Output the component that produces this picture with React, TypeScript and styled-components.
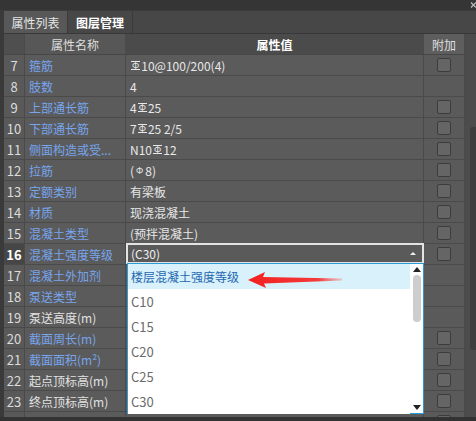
import React from "react";
import styled, { createGlobalStyle } from "styled-components";

const GlobalStyle = createGlobalStyle`
  html, body {
    margin: 0;
    padding: 0;
    background: #353535;
  }
  body {
    font-family: "Noto Sans CJK SC", "Noto Sans", sans-serif;
    font-size: 12px;
  }
  * {
    box-sizing: border-box;
  }
`;

const Window = styled.div`
  width: 476px;
  height: 421px;
  display: flex;
  flex-direction: column;
  background: #353535;
  overflow: hidden;
`;

const TopStrip = styled.div`
  height: 10px;
  flex-shrink: 0;
  display: flex;
  justify-content: flex-end;
  align-items: flex-start;
  padding-top: 2px;
  margin-right: -2px;
`;

const Content = styled.div`
  flex: 1;
  display: flex;
  min-height: 0;
`;

const LeftEdge = styled.div`
  width: 4px;
  flex-shrink: 0;
  background: #3a3a3a;
`;

const Panel = styled.div`
  flex: 1;
  display: flex;
  flex-direction: column;
  min-width: 0;
`;

const TabBar = styled.div`
  height: 24px;
  flex-shrink: 0;
  display: flex;
  background: #474747;
  border-top: 1px solid #3c3c3c;
  border-bottom: 1px solid #383838;
`;

const Tab = styled.div<{ $active?: boolean }>`
  width: ${(p) => (p.$active ? 64 : 65)}px;
  display: flex;
  align-items: center;
  justify-content: center;
  background: ${(p) => (p.$active ? "#585858" : "#474747")};
  color: ${(p) => (p.$active ? "#e6e6e6" : "#ffffff")};
  font-weight: ${(p) => (p.$active ? 400 : 700)};
  border-right: 1px solid #3a3a3a;
`;

const GridArea = styled.div`
  flex: 1;
  display: flex;
  min-height: 0;
`;

const Table = styled.div`
  width: 461px;
  flex-shrink: 0;
  overflow: hidden;
  background: #5a5a5a;
`;

const HeaderRow = styled.div`
  display: grid;
  grid-template-columns: 21px 101px 298px 41px;
  height: 21px;
  border-bottom: 1px solid #474747;
`;

const HeadCell = styled.div<{ $tone: "num" | "name" | "value" | "add" }>`
  display: flex;
  align-items: center;
  justify-content: center;
  border-right: 1px solid #4a4a4a;
  background: ${(p) =>
    p.$tone === "value" ? "#4b4b4b" : p.$tone === "add" ? "#5e5e5e" : p.$tone === "num" ? "#4f4f4f" : "#575757"};
  color: ${(p) => (p.$tone === "value" ? "#ffffff" : "#dedede")};
  font-weight: ${(p) => (p.$tone === "value" ? 700 : 400)};
`;

const Row = styled.div`
  display: grid;
  grid-template-columns: 21px 101px 298px 41px;
  height: 21px;
  border-bottom: 1px solid #4a4a4a;
  background: #5b5b5b;
`;

const NumCell = styled.div<{ $current?: boolean }>`
  display: flex;
  align-items: center;
  justify-content: center;
  border-right: 1px solid #4a4a4a;
  background: ${(p) => (p.$current ? "#464646" : "#595959")};
  color: ${(p) => (p.$current ? "#ffffff" : "#dcdcdc")};
  font-weight: ${(p) => (p.$current ? 700 : 400)};
  font-size: 13px;
`;

const NameCell = styled.div<{ $plain?: boolean }>`
  display: flex;
  align-items: center;
  padding-left: 4px;
  border-right: 1px solid #4a4a4a;
  color: ${(p) => (p.$plain ? "#e2e2e2" : "#77a5ee")};
  white-space: nowrap;
  overflow: hidden;
`;

const ValueCell = styled.div`
  position: relative;
  display: flex;
  align-items: center;
  padding-left: 4px;
  border-right: 1px solid #4a4a4a;
  color: #e8e8e8;
  white-space: nowrap;
`;

const AddCell = styled.div`
  display: flex;
  align-items: center;
  justify-content: center;
  border-right: 1px solid #4a4a4a;
  background: #5a5a5a;
`;

const CheckBox = styled.div`
  width: 14px;
  height: 14px;
  border: 1px solid #3c3c3c;
  border-radius: 2px;
  background: #656565;
`;

const Rebar = styled.span<{ $plain?: boolean }>`
  display: inline-block;
  font-size: 9px;
  line-height: 7px;
  padding: 0 1px;
  margin: 0 1px;
  vertical-align: 4px;
  border-top: ${(p) => (p.$plain ? "none" : "1px solid currentColor")};
  border-bottom: ${(p) => (p.$plain ? "none" : "1px solid currentColor")};
`;

const Combo = styled.div`
  position: absolute;
  top: -1px;
  left: 0;
  right: -1px;
  height: 21px;
  display: flex;
  align-items: center;
  justify-content: space-between;
  padding: 0 6px 0 3px;
  border: 2px solid #e3e3e3;
  background: #5a5a5a;
  color: #eeeeee;
  z-index: 4;
`;

const UpMark = styled.span`
  width: 0;
  height: 0;
  border-left: 3px solid transparent;
  border-right: 3px solid transparent;
  border-bottom: 3px solid #f0f0f0;
`;

const DropList = styled.div`
  position: absolute;
  top: 19px;
  left: 1px;
  right: -1px;
  height: 151px;
  display: flex;
  border: 1px solid #2b9bd6;
  background: #ffffff;
  z-index: 5;
`;

const Items = styled.div`
  flex: 1;
  display: flex;
  flex-direction: column;
`;

const Item = styled.div<{ $selected?: boolean }>`
  position: relative;
  height: 25px;
  flex-shrink: 0;
  display: flex;
  align-items: center;
  padding-left: 3px;
  background: ${(p) => (p.$selected ? "#d8f1fa" : "#ffffff")};
  color: ${(p) => (p.$selected ? "#2467b0" : "#6a6a6a")};
  font-size: ${(p) => (p.$selected ? 12 : 13)}px;
`;

const Pointer = styled.svg`
  position: absolute;
  left: 120px;
  top: 7px;
`;

const ListScroll = styled.div`
  width: 13px;
  display: flex;
  flex-direction: column;
  align-items: center;
  padding: 3px 0 3px;
`;

const Arrow = styled.span<{ $down?: boolean }>`
  width: 0;
  height: 0;
  border-left: 4px solid transparent;
  border-right: 4px solid transparent;
  border-bottom: ${(p) => (p.$down ? "none" : "5px solid #222")};
  border-top: ${(p) => (p.$down ? "5px solid #222" : "none")};
  margin-top: ${(p) => (p.$down ? "auto" : "0")};
`;

const ListThumb = styled.div`
  width: 8px;
  height: 47px;
  margin-top: 3px;
  border-radius: 4px;
  background: #cdcdcd;
`;

const VScroll = styled.div`
  width: 11px;
  flex-shrink: 0;
  background: #4c4c4c;
  padding-top: 93px;
`;

const VThumb = styled.div`
  width: 6px;
  height: 223px;
  margin-left: 5px;
  border-radius: 3px 0 0 3px;
  background: #3e3e3e;
`;

const BottomBar = styled.div`
  height: 4px;
  flex-shrink: 0;
  background: #333333;
`;

type RowData = {
  n: number;
  name: string;
  value?: React.ReactNode;
  plain?: boolean;
  check?: boolean;
  open?: boolean;
};

const rows: RowData[] = [
  { n: 7, name: "箍筋", value: <><Rebar>Φ</Rebar>10@100/200(4)</>, check: true },
  { n: 8, name: "肢数", value: "4" },
  { n: 9, name: "上部通长筋", value: <>4<Rebar>Φ</Rebar>25</>, check: true },
  { n: 10, name: "下部通长筋", value: <>7<Rebar>Φ</Rebar>25 2/5</>, check: true },
  { n: 11, name: "侧面构造或受...", value: <>N10<Rebar>Φ</Rebar>12</>, check: true },
  { n: 12, name: "拉筋", value: <>(<Rebar $plain>Φ</Rebar>8)</>, check: true },
  { n: 13, name: "定额类别", value: "有梁板", check: true },
  { n: 14, name: "材质", value: "现浇混凝土", check: true },
  { n: 15, name: "混凝土类型", value: "(预拌混凝土)", check: true },
  { n: 16, name: "混凝土强度等级", open: true, check: true },
  { n: 17, name: "混凝土外加剂" },
  { n: 18, name: "泵送类型" },
  { n: 19, name: "泵送高度(m)", plain: true },
  { n: 20, name: "截面周长(m)", check: true },
  { n: 21, name: "截面面积(m²)", check: true },
  { n: 22, name: "起点顶标高(m)", plain: true, check: true },
  { n: 23, name: "终点顶标高(m)", plain: true, check: true },
  { n: 24, name: "备注", plain: true, check: true },
];

const grades = ["C10", "C15", "C20", "C25", "C30"];

const GradeDropdown: React.FC = () => (
  <>
    <Combo>
      <span>(C30)</span>
      <UpMark />
    </Combo>
    <DropList>
      <Items>
        <Item $selected>
          楼层混凝土强度等级
          <Pointer width="96" height="18" viewBox="0 0 96 18">
            <defs>
              <linearGradient id="arrowFade" x1="0" x2="1" y1="0" y2="0">
                <stop offset="0" stopColor="#f32020" />
                <stop offset="0.75" stopColor="#f43a3a" />
                <stop offset="1" stopColor="#f87070" stopOpacity="0.35" />
              </linearGradient>
            </defs>
            <polygon
              points="0,9 17,1 15,6 94,7.5 94,9.5 16,12.5 18,17"
              fill="url(#arrowFade)"
            />
          </Pointer>
        </Item>
        {grades.map((g) => (
          <Item key={g}>{g}</Item>
        ))}
      </Items>
      <ListScroll>
        <Arrow />
        <ListThumb />
        <Arrow $down />
      </ListScroll>
    </DropList>
  </>
);

const App: React.FC = () => {
  return (
    <>
      <GlobalStyle />
      <Window>
        <TopStrip>
          <svg width="8" height="6" viewBox="0 0 8 6">
            <path d="M1 0.5 L6 5.5 M6 0.5 L1 5.5" stroke="#bdbdbd" strokeWidth="1.2" />
          </svg>
        </TopStrip>
        <Content>
          <LeftEdge />
          <Panel>
            <TabBar>
              <Tab $active>属性列表</Tab>
              <Tab>图层管理</Tab>
            </TabBar>
            <GridArea>
              <Table>
                <HeaderRow>
                  <HeadCell $tone="num" />
                  <HeadCell $tone="name">属性名称</HeadCell>
                  <HeadCell $tone="value">属性值</HeadCell>
                  <HeadCell $tone="add">附加</HeadCell>
                </HeaderRow>
                {rows.map((r) => (
                  <Row key={r.n}>
                    <NumCell $current={r.open}>{r.n}</NumCell>
                    <NameCell $plain={r.plain}>{r.name}</NameCell>
                    <ValueCell>{r.open ? <GradeDropdown /> : r.value}</ValueCell>
                    <AddCell>{r.check && <CheckBox />}</AddCell>
                  </Row>
                ))}
              </Table>
              <VScroll>
                <VThumb />
              </VScroll>
            </GridArea>
          </Panel>
        </Content>
        <BottomBar />
      </Window>
    </>
  );
};

export default App;
